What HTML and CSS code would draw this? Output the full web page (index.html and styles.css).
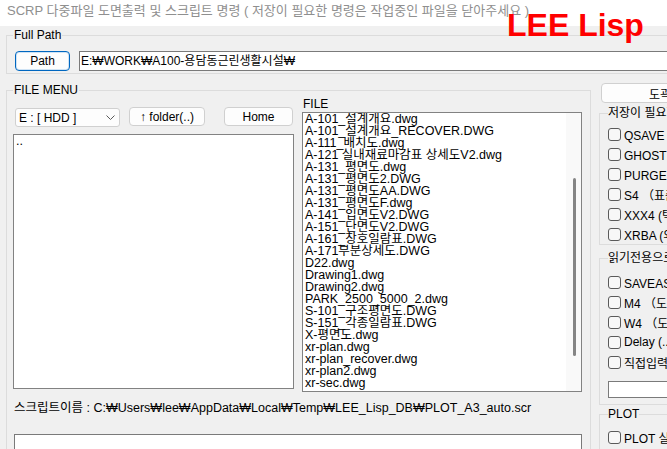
FILE: index.html
```html
<!DOCTYPE html>
<html>
	<head>
		<meta charset="utf-8">
		<title>SCRP</title>
		<link rel="stylesheet" href="styles.css">
	</head>
	<body>
		<div class="window">
			<div class="titlebar">SCRP 다중파일 도면출력 및 스크립트 명령 ( 저장이 필요한 명령은 작업중인 파일을 닫아주세요 )</div>
			<div class="logo">LEE Lisp</div>
			<div class="dialog">
				<fieldset class="group fullPath">
					<legend>Full Path</legend>
					<div class="pathRow">
						<button class="btn default pathBtn">Path</button>
						<div class="textBox pathBox">E:₩WORK₩A100-용담동근린생활시설₩</div>
					</div>
				</fieldset>
				<div class="lower">
					<fieldset class="group fileMenu">
						<legend>FILE MENU</legend>
						<div class="browser">
							<div class="leftCol">
								<div class="toolRow">
									<div class="combo">
										<span>E : [ HDD ]</span>
										<svg width="9" height="5" viewBox="0 0 9 5"><path d="M0.5 0.5 L4.5 4.5 L8.5 0.5" fill="none" stroke="#5a5a5a" stroke-width="1"/></svg>
									</div>
									<button class="btn folderBtn">↑ folder(..)</button>
									<button class="btn homeBtn">Home</button>
								</div>
								<ul class="list folders">
									<li>..</li>
								</ul>
							</div>
							<div class="rightCol">
								<div class="listLabel">FILE</div>
								<div class="list files">
									<ul>
										<li>A-101_설계개요.dwg</li>
										<li>A-101_설계개요_RECOVER.DWG</li>
										<li>A-111_배치도.dwg</li>
										<li>A-121 실내재료마감표 상세도V2.dwg</li>
										<li>A-131_평면도.dwg</li>
										<li>A-131_평면도2.DWG</li>
										<li>A-131_평면도AA.DWG</li>
										<li>A-131_평면도F.dwg</li>
										<li>A-141_입면도V2.DWG</li>
										<li>A-151_단면도V2.DWG</li>
										<li>A-161_창호일람표.DWG</li>
										<li>A-171부분상세도.DWG</li>
										<li>D22.dwg</li>
										<li>Drawing1.dwg</li>
										<li>Drawing2.dwg</li>
										<li>PARK_2500_5000_2.dwg</li>
										<li>S-101_구조평면도.DWG</li>
										<li>S-151_각종일람표.DWG</li>
										<li>X-평면도.dwg</li>
										<li>xr-plan.dwg</li>
										<li>xr-plan_recover.dwg</li>
										<li>xr-plan2.dwg</li>
										<li>xr-sec.dwg</li>
									</ul>
									<div class="scroll"><div class="thumb"></div></div>
								</div>
							</div>
						</div>
						<div class="scriptName">스크립트이름 : C:₩Users₩lee₩AppData₩Local₩Temp₩LEE_Lisp_DB₩PLOT_A3_auto.scr</div>
						<div class="memo"></div>
					</fieldset>
					<div class="options">
						<button class="btn frameBtn">도곽설정</button>
						<fieldset class="group opt saveOpt">
							<legend>저장이 필요한 명령</legend>
							<label class="check"><span class="box"></span>QSAVE (저장)</label>
							<label class="check"><span class="box"></span>GHOST (정리)</label>
							<label class="check"><span class="box"></span>PURGE (정리)</label>
							<label class="check"><span class="box"></span>S4 （표준화）</label>
							<label class="check"><span class="box"></span>XXX4 (텍스트)</label>
							<label class="check"><span class="box"></span>XRBA (외부참조)</label>
						</fieldset>
						<fieldset class="group opt readOpt">
							<legend>읽기전용으로 실행</legend>
							<label class="check"><span class="box"></span>SAVEAS (다른이름)</label>
							<label class="check"><span class="box"></span>M4 （도면정리）</label>
							<label class="check"><span class="box"></span>W4 （도면블록）</label>
							<label class="check"><span class="box"></span>Delay (..)</label>
							<label class="check"><span class="box"></span>직접입력</label>
							<div class="textBox cmdBox"></div>
						</fieldset>
						<fieldset class="group opt plotOpt">
							<legend>PLOT</legend>
							<label class="check"><span class="box"></span>PLOT 실행</label>
						</fieldset>
					</div>
				</div>
			</div>
		</div>
	</body>
</html>
```

FILE: styles.css
```css
html,body{margin: 0;}
body{
	font-family: "Liberation Sans", "Noto Sans CJK KR", sans-serif;
	font-size: 12px;
	color: #000;
	background: #f0f0f0;
}
.window{
	position: relative;
	width: 667px;
	height: 449px;
	overflow: hidden;
	background: #f0f0f0;
}
.titlebar{
	height: 26px;
	box-sizing: border-box;
	padding-left: 7px;
	font-size: 13px;
	line-height: 22px;
	background: #fff;
	color: #8f8f8f;
	white-space: nowrap;
}
.logo{
	position: absolute;
	left: 507px;
	top: 9px;
	font-size: 32px;
	line-height: 32px;
	font-weight: bold;
	color: #ff0000;
}
.dialog{padding-top: 2px;}

/* group boxes */
.group{
	margin: 0;
	min-width: 0;
	border: 1px solid #dcdcdc;
	border-radius: 0;
}
.group legend{
	padding: 0 1px;
	line-height: 14px;
}
.fullPath{
	margin-left: 6px;
	width: 800px;
	padding: 9px 0 2px 6px;
}
.pathRow{display: flex;}
.pathBtn{
	margin-left: 2px;
	width: 55px;
	height: 20px;
}
.pathBox{
	margin-left: 9px;
	width: 700px;
	height: 20px;
}
.lower{
	display: flex;
	align-items: flex-start;
	margin-top: 9px;
}
.fileMenu{
	flex-shrink: 0;
	margin-left: 6px;
	padding: 0 8px 10px 6px;
}

/* controls */
.btn{
	font: inherit;
	padding: 0;
	background: #fdfdfd;
	border: 1px solid #d0d0d0;
	border-radius: 4px;
	color: #000;
	box-sizing: border-box;
}
.btn.default{
	border-color: #0067c0;
	box-shadow: inset 0 0 0 1px #cfe3f5;
}
.textBox{
	box-sizing: border-box;
	border: 1px solid #7a7a7a;
	background: #fff;
	padding-left: 1px;
	line-height: 18px;
	white-space: nowrap;
}

.browser{
	display: grid;
	grid-template-columns: 281px 280px;
	column-gap: 8px;
	align-items: start;
}
.toolRow{
	display: flex;
	align-items: flex-start;
	margin-top: 10px;
	height: 20px;
}
.combo{
	display: flex;
	align-items: center;
	justify-content: space-between;
	box-sizing: border-box;
	margin: 1px 0 0 2px;
	width: 105px;
	height: 19px;
	padding: 0 4px 0 3px;
	background: #fdfdfd;
	border: 1px solid #d0d0d0;
	border-radius: 3px;
}
.folderBtn{
	margin-left: 9px;
	width: 76px;
	height: 19px;
}
.homeBtn{
	margin-left: 19px;
	width: 69px;
	height: 19px;
}
.list{
	box-sizing: border-box;
	margin: 0;
	padding: 0;
	list-style: none;
	background: #fff;
	border: 1px solid #828282;
	overflow: hidden;
}
.list li{
	font-size: 12.5px;
	line-height: 12px;
	white-space: nowrap;
}
.folders{
	margin-top: 7px;
	height: 255px;
	padding-left: 2px;
}
.listLabel{
	height: 15px;
	line-height: 15px;
	padding-left: 1px;
}
.files{
	display: flex;
	height: 280px;
}
.files ul{
	flex: 1;
	margin: 0;
	padding: 0 0 0 2px;
	list-style: none;
}
.scroll{
	width: 15px;
	padding-top: 65px;
	background: #f9f9f9;
	flex-shrink: 0;
}
.thumb{
	width: 3px;
	height: 178px;
	margin-left: 7px;
	background: #858585;
	border-radius: 2px;
}
.scriptName{
	margin-top: 8px;
	padding-left: 1px;
	font-size: 12.5px;
	line-height: 16px;
	white-space: nowrap;
}
.memo{
	margin: 18px 0 0 1px;
	width: 568px;
	height: 40px;
	box-sizing: border-box;
	background: #fff;
	border: 1px solid #7a7a7a;
}

/* right column */
.options{
	flex-shrink: 0;
	width: 200px;
	margin-left: 8px;
}
.frameBtn{
	margin-left: 2px;
	width: 140px;
	height: 20px;
}
.opt{padding: 0 0 0 8px;}
.opt legend{padding: 0;}
.saveOpt{margin-top: 3px; padding-top: 4px;}
.readOpt{margin-top: 6px; padding-top: 7px; padding-bottom: 6px;}
.plotOpt{margin-top: 2px; padding-top: 6px; padding-bottom: 10px;}
.check{
	display: flex;
	align-items: center;
	height: 20px;
	white-space: nowrap;
}
.box{
	flex-shrink: 0;
	width: 13px;
	height: 13px;
	box-sizing: border-box;
	margin-right: 3px;
	border: 1px solid #5a5a5a;
	border-radius: 3px;
	background: #f7f7f7;
}
.cmdBox{
	margin-top: 9px;
	width: 120px;
	height: 17px;
}
```
